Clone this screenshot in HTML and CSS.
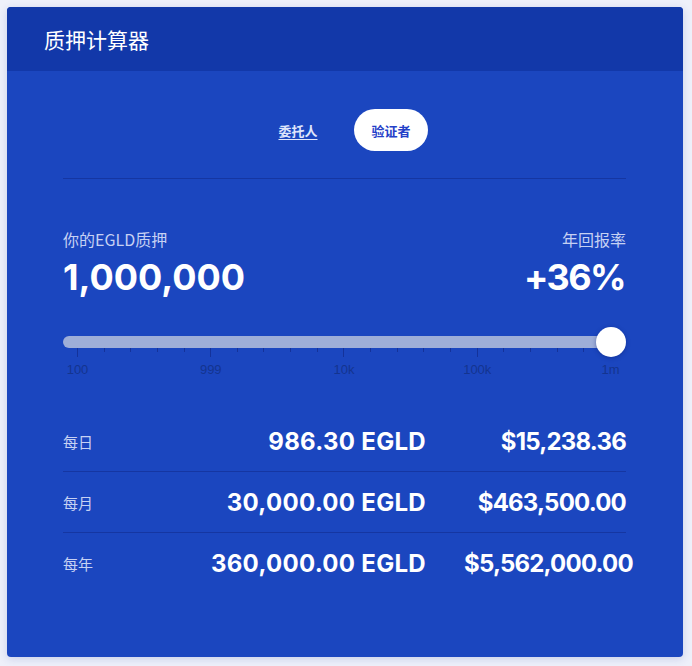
FILE: index.html
```html
<!DOCTYPE html>
<html lang="zh">
<head>
<meta charset="utf-8">
<title>质押计算器</title>
<link rel="stylesheet" href="styles.css">
</head>
<body>
<div class="card">
  <div class="card-header">质押计算器</div>
  <div class="card-body">
    <div class="toggle">
      <button class="tab tab-link">委托人</button>
      <button class="tab tab-active">验证者</button>
    </div>
    <div class="divider"></div>

    <div class="stake-row">
      <div class="stake-col">
        <div class="label">你的EGLD质押</div>
        <div class="big">1,000,000</div>
      </div>
      <div class="stake-col right">
        <div class="label">年回报率</div>
        <div class="big rate">+36%</div>
      </div>
    </div>

    <div class="slider">
      <div class="track-wrap">
        <div class="track"></div>
        <div class="thumb"></div>
      </div>
      <div class="ticks">
        <span class="tick major"></span><span class="tick"></span><span class="tick"></span><span class="tick"></span><span class="tick"></span>
        <span class="tick major"></span><span class="tick"></span><span class="tick"></span><span class="tick"></span><span class="tick"></span>
        <span class="tick major"></span><span class="tick"></span><span class="tick"></span><span class="tick"></span><span class="tick"></span>
        <span class="tick major"></span><span class="tick"></span><span class="tick"></span><span class="tick"></span><span class="tick"></span>
        <span class="tick major"></span>
      </div>
      <div class="tick-labels">
        <span class="tl"><span>100</span></span>
        <span class="tl"><span>999</span></span>
        <span class="tl"><span>10k</span></span>
        <span class="tl"><span>100k</span></span>
        <span class="tl"><span>1m</span></span>
      </div>
    </div>

    <div class="results">
      <div class="res-row">
        <div class="res-label">每日</div>
        <div class="res-egld">986.30 EGLD</div>
        <div class="res-usd">$15,238.36</div>
      </div>
      <div class="res-row">
        <div class="res-label">每月</div>
        <div class="res-egld">30,000.00 EGLD</div>
        <div class="res-usd">$463,500.00</div>
      </div>
      <div class="res-row last">
        <div class="res-label">每年</div>
        <div class="res-egld">360,000.00 EGLD</div>
        <div class="res-usd">$5,562,000.00</div>
      </div>
    </div>
  </div>
</div>
</body>
</html>
```
FILE: styles.css
```css
* { box-sizing: border-box; }

html, body {
  margin: 0;
  padding: 0;
}

body {
  background: #eef0fa;
  padding: 7px 9px 9px 7px;
  font-family: "Inter", "Noto Sans CJK SC", sans-serif;
  color: #ffffff;
}

.card {
  width: 676px;
  height: 650px;
  border-radius: 4px;
  overflow: hidden;
  background: #1b46bf;
  box-shadow: 0 2px 8px rgba(40, 60, 160, 0.18);
}

.card-header {
  height: 64px;
  background: #1238a9;
  display: flex;
  align-items: center;
  padding-left: 37px;
  font-family: "Noto Sans CJK SC", sans-serif;
  font-size: 21px;
  font-weight: 400;
  color: #ffffff;
}

.card-body {
  padding: 38px 57px 0 56px;
}

.toggle {
  display: flex;
  justify-content: center;
  gap: 19px;
}

.tab {
  width: 74px;
  height: 42px;
  border: none;
  border-radius: 21px;
  font-family: "Noto Sans CJK SC", sans-serif;
  font-size: 13px;
  font-weight: 700;
  padding: 0;
  cursor: pointer;
}

.tab-link {
  background: transparent;
  color: #dfe5fb;
  text-decoration: underline;
  text-underline-offset: 3px;
}

.tab-active {
  background: #ffffff;
  color: #2440c8;
}

.divider {
  height: 1px;
  background: #1536a2;
  margin-top: 27px;
}

.stake-row {
  display: flex;
  justify-content: space-between;
  margin-top: 49px;
}

.stake-col {
  display: flex;
  flex-direction: column;
}

.stake-col.right {
  align-items: flex-end;
}

.label {
  font-family: "Noto Sans CJK SC", sans-serif;
  font-size: 16px;
  line-height: 22px;
  color: #c6d1f3;
}

.big {
  font-family: "Inter", sans-serif;
  font-size: 36px;
  font-weight: 700;
  line-height: 44px;
  margin-top: 5px;
  color: #ffffff;
}

.big.rate {
  letter-spacing: -1.6px;
  margin-right: 1px;
}

.slider {
  margin-top: 37px;
}

.track-wrap {
  position: relative;
  height: 12px;
}

.track {
  width: 548px;
  height: 12px;
  background: #9eaed8;
  border-radius: 6px 0 0 6px;
}

.thumb {
  position: absolute;
  left: 533px;
  top: -9px;
  width: 30px;
  height: 30px;
  border-radius: 50%;
  background: #ffffff;
  box-shadow: 0 1px 4px rgba(10, 30, 110, 0.45);
}

.ticks {
  display: flex;
  justify-content: space-between;
  align-items: flex-start;
  margin-left: 14px;
  width: 534px;
  height: 9px;
}

.tick {
  width: 1px;
  height: 4px;
  background: #14329a;
}

.tick.major {
  height: 9px;
}

.tick-labels {
  display: flex;
  justify-content: space-between;
  margin-left: 14px;
  width: 534px;
  margin-top: 6px;
}

.tl {
  width: 1px;
  display: flex;
  justify-content: center;
  font-family: "Liberation Sans", Arial, sans-serif;
  font-size: 13px;
  line-height: 14px;
  color: #14348f;
}

.tl span {
  white-space: nowrap;
}

.results {
  margin-top: 34px;
}

.res-row {
  display: flex;
  align-items: center;
  height: 61px;
  border-bottom: 1px solid #1536a2;
}

.res-row.last {
  border-bottom: none;
}

.res-label {
  flex: 1;
  font-family: "Noto Sans CJK SC", sans-serif;
  font-size: 15px;
  color: #c6d1f3;
}

.res-egld {
  width: 260px;
  text-align: right;
  font-size: 24px;
  font-weight: 700;
  letter-spacing: 0.3px;
  white-space: nowrap;
}

.res-usd {
  width: 162px;
  margin-left: 38px;
  text-align: right;
  font-size: 24px;
  font-weight: 700;
  letter-spacing: -0.8px;
  white-space: nowrap;
}
```
